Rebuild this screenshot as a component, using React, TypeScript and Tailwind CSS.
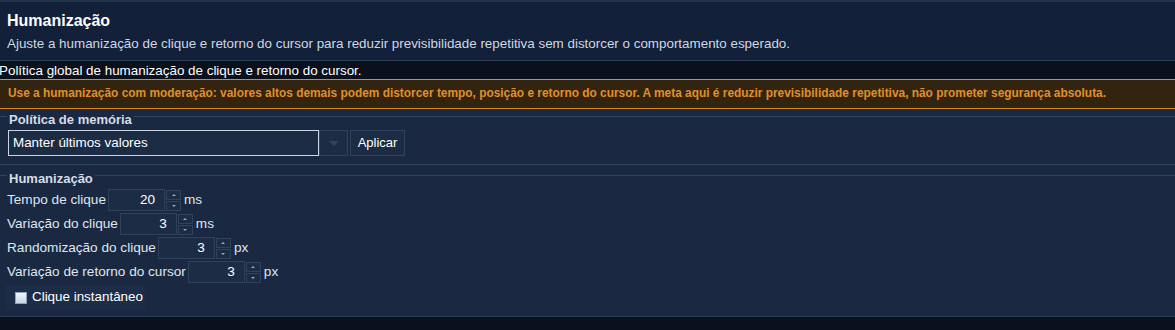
import React, { useState } from 'react';

const rows = [
  { label: 'Tempo de clique', value: '20', unit: 'ms' },
  { label: 'Variação do clique', value: '3', unit: 'ms' },
  { label: 'Randomização do clique', value: '3', unit: 'px' },
  { label: 'Variação de retorno do cursor', value: '3', unit: 'px' },
];

const SpinRow: React.FC<{ label: string; value: string; unit: string }> = ({ label, value, unit }) => (
  <div className="flex items-center h-[24px]">
    <span className="text-[13.6px] text-[#dfe6ee] mr-[2px] whitespace-nowrap">{label}</span>
    <div className="w-[57px] h-[22px] border border-[#2f445c] bg-[#1c2c44] flex items-center justify-end pr-[9px] text-[13.6px] text-white">
      {value}
    </div>
    <div className="flex flex-col gap-px ml-px">
      <div className="w-[15px] h-[10px] border border-[#2f445c] bg-[#1c2c44] flex items-center justify-center">
        <span className="w-0 h-0 border-x-[2px] border-x-transparent border-b-[2px] border-b-[#9aa8b8]" />
      </div>
      <div className="w-[15px] h-[10px] border border-[#2f445c] bg-[#1c2c44] flex items-center justify-center">
        <span className="w-0 h-0 border-x-[2px] border-x-transparent border-t-[2px] border-t-[#9aa8b8]" />
      </div>
    </div>
    <span className="ml-[3px] text-[13.6px] text-[#dfe6ee]">{unit}</span>
  </div>
);

const GroupTitle: React.FC<{ title: string }> = ({ title }) => (
  <div className="flex items-center h-[14px]">
    <div className="w-[7px] h-px bg-[#2e4560] -translate-y-[3px]" />
    <span className="px-[2px] text-[13px] font-semibold text-[#d5dde7] leading-none">{title}</span>
    <div className="flex-1 h-px bg-[#2e4560] -translate-y-[3px]" />
  </div>
);

export default function App() {
  const [instant, setInstant] = useState(false);

  return (
    <div className="w-[1175px] h-[330px] overflow-hidden bg-[#0a111c] font-['Liberation_Sans',Arial,sans-serif]">
      {/* Header */}
      <div className="border-t-2 border-[#24344b] bg-[#12203a] h-[61px] border-b border-b-[#2b3d55] px-[7px] pt-[10px]">
        <h1 className="text-[16px] font-bold text-white leading-[18px]">Humanização</h1>
        <p className="mt-[6px] text-[13.4px] text-[#cfd7e2] leading-[16px]">
          Ajuste a humanização de clique e retorno do cursor para reduzir previsibilidade repetitiva sem distorcer o comportamento esperado.
        </p>
      </div>

      {/* Subtitle strip */}
      <div className="h-[18px] flex items-center pt-[2px] -ml-[1px] text-[13.4px] text-white">
        Política global de humanização de clique e retorno do cursor.
      </div>

      {/* Warning */}
      <div className="h-[30px] border-y border-[#d98b22] bg-[#33240f] flex items-center px-[8px] text-[11.9px] font-bold text-[#e08f28]">
        Use a humanização com moderação: valores altos demais podem distorcer tempo, posição e retorno do cursor. A meta aqui é reduzir previsibilidade repetitiva, não prometer segurança absoluta.
      </div>

      {/* Main */}
      <div className="bg-[#1a2941] h-[208px] border-b border-[#2b3d55] pt-[3px]">
        <GroupTitle title="Política de memória" />
        <div className="flex items-center pl-[8px] mt-[4px] h-[26px]">
          <div className="w-[311px] h-[26px] border border-[#c9d5e2] bg-[#1c2c45] flex items-center px-[4px] text-[13.4px] text-white">
            Manter últimos valores
          </div>
          <div className="w-[29px] h-[26px] border border-[#2f445c] bg-[#1c2c44] flex items-center justify-center">
            <span className="w-0 h-0 border-x-[5px] border-x-transparent border-t-[5px] border-t-[#3c424b]" />
          </div>
          <button className="ml-[2px] w-[55px] h-[26px] border border-[#2f445c] bg-[#1c2c44] text-[13px] text-white">
            Aplicar
          </button>
        </div>
        <div className="mt-[8px] h-px bg-[#2e4560]" />
        <div className="mt-[6px]">
          <GroupTitle title="Humanização" />
        </div>
        <div className="pl-[7px] mt-[3px]">
          {rows.map((r) => (
            <SpinRow key={r.label} {...r} />
          ))}
        </div>
        <div
          className="ml-[6px] mt-[1px] w-[139px] h-[25px] bg-[#1d2d47] flex items-center pl-[9px] cursor-pointer"
          onClick={() => setInstant(!instant)}
        >
          <span className="w-[12px] h-[12px] border border-[#8fa3ba] bg-gradient-to-b from-[#f2f6fb] to-[#c8d6e6] flex items-center justify-center text-[9px] text-[#1a2941]">
            {instant ? '✓' : ''}
          </span>
          <span className="ml-[5px] text-[13.4px] text-white">Clique instantâneo</span>
        </div>
      </div>
    </div>
  );
}
